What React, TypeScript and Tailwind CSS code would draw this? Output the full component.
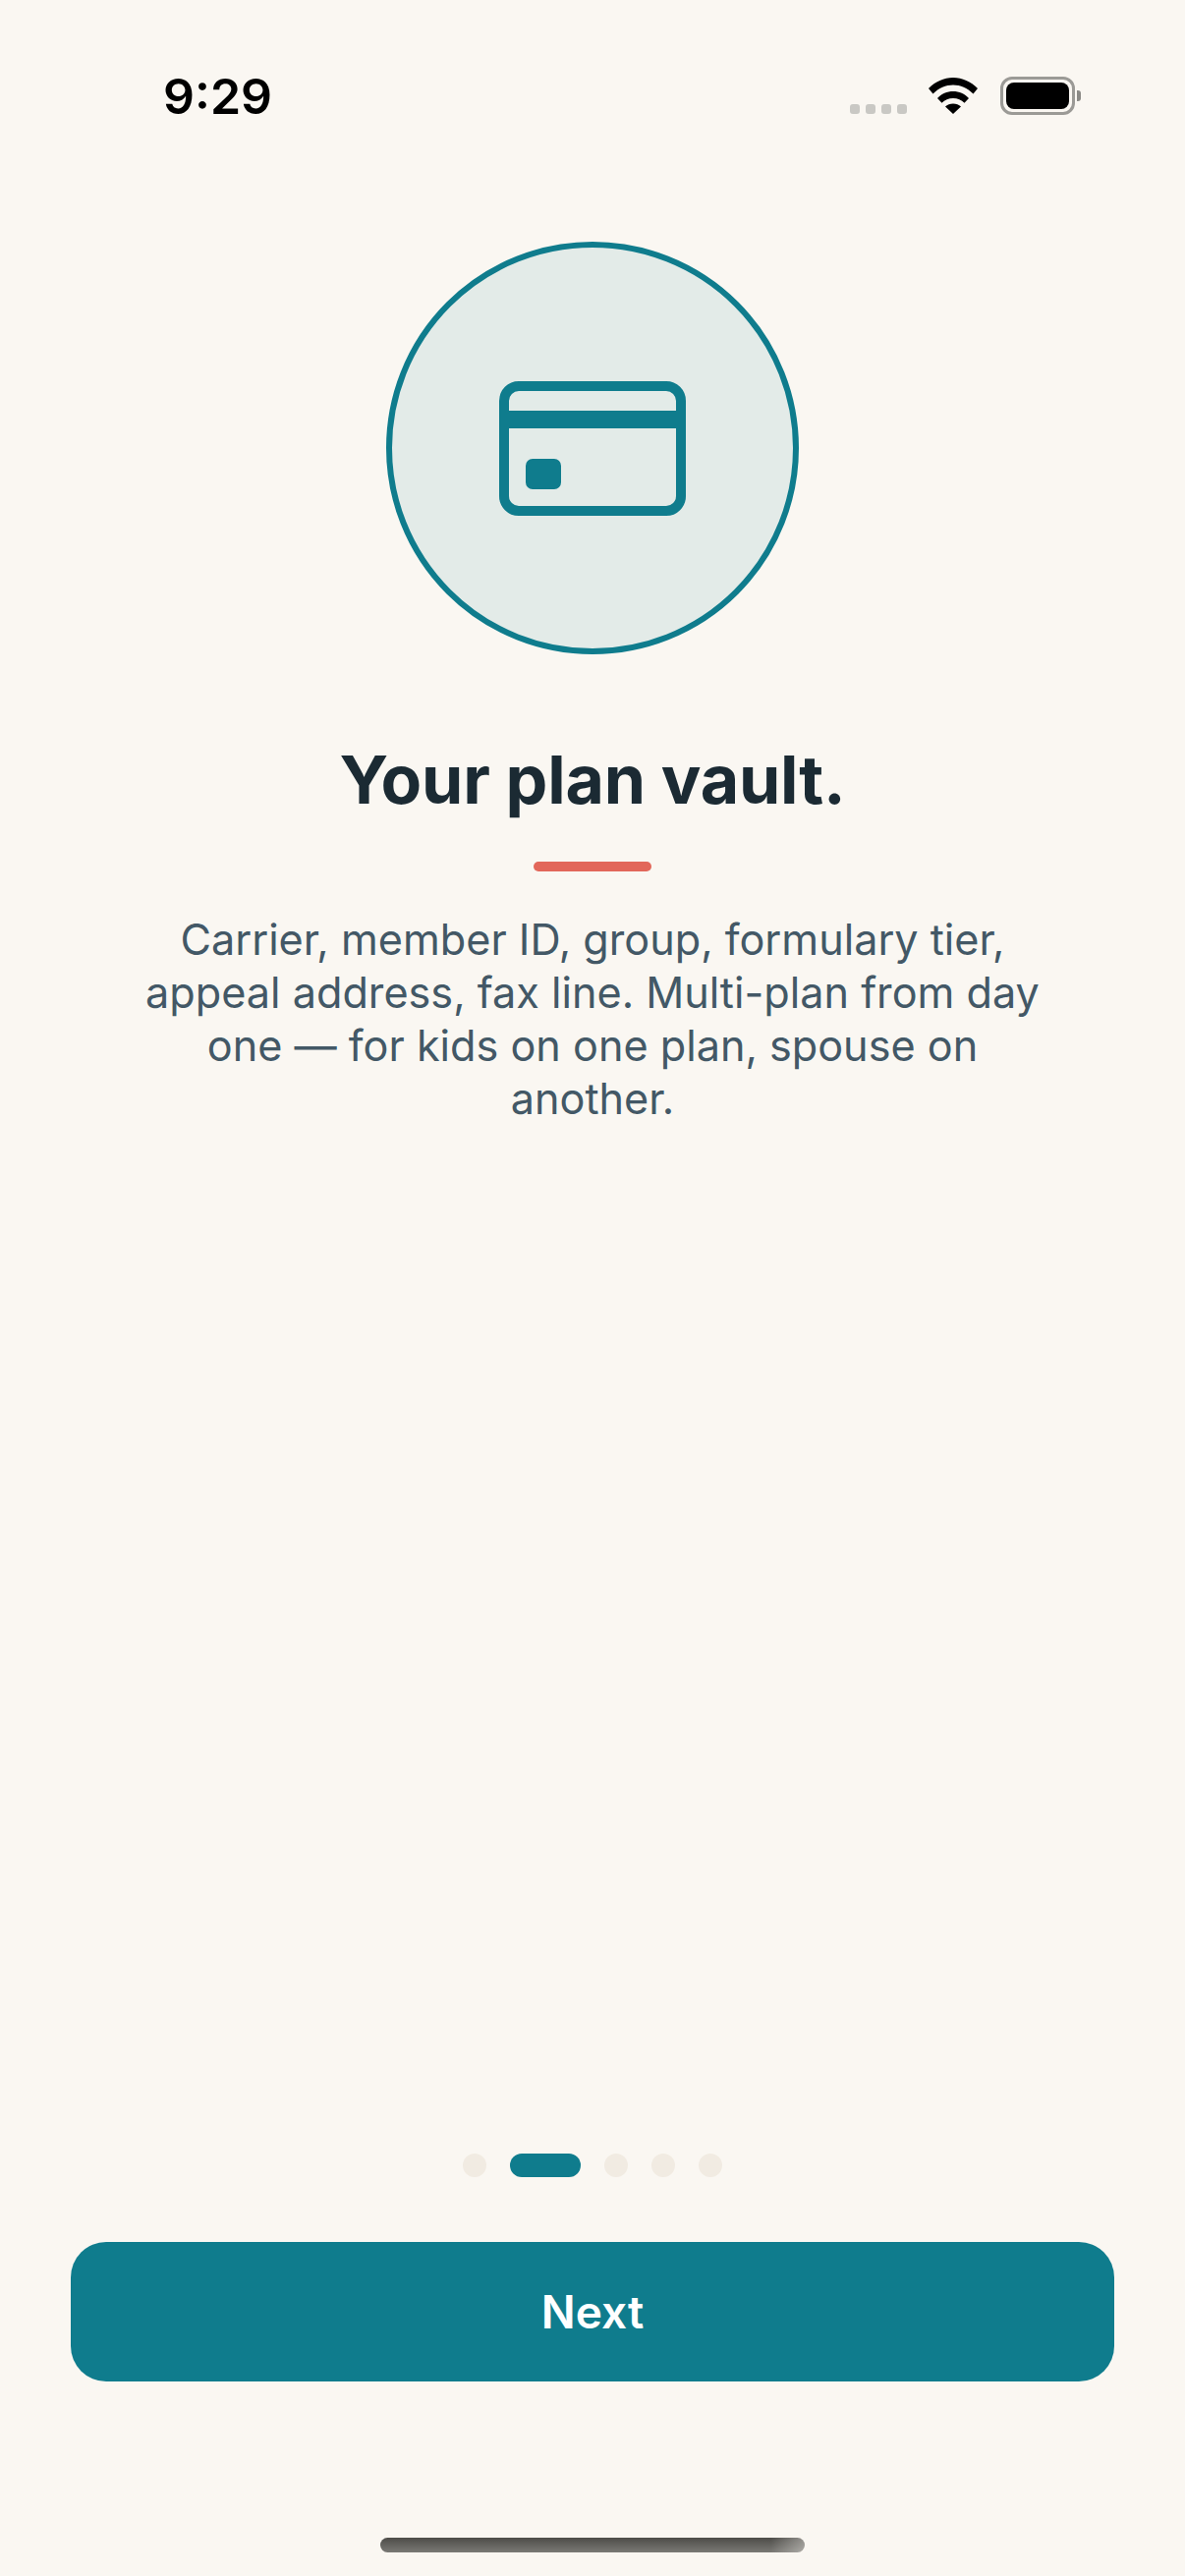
const TEAL = '#0f7c8d'

function StatusBar() {
  return (
    <div className="flex h-[246px] shrink-0 justify-between pl-[166px] pr-[106px] pt-[68px]">
      <span className="font-['Inter',sans-serif] text-[50px] font-semibold leading-[60px] text-black">9:29</span>
      <div className="mt-[10px] flex h-[39px] items-end">
        <div className="mb-[1px] mr-[22px] flex gap-[6px]">
          <span className="h-[10px] w-[10px] rounded-[3px] bg-[#c9c8c4]" />
          <span className="h-[10px] w-[10px] rounded-[3px] bg-[#c9c8c4]" />
          <span className="h-[10px] w-[10px] rounded-[3px] bg-[#c9c8c4]" />
          <span className="h-[10px] w-[10px] rounded-[3px] bg-[#c9c8c4]" />
        </div>
        <svg width="50" height="37" viewBox="0 0 50 37" className="mb-[1px] mr-[23px]">
          <path d="M0 11C7 4 15.500 0 25 0s18 4 25 11l-4.500 5.500C39.500 10.500 32.500 7.500 25 7.500S10.500 10.500 4.500 16.500z" fill="#000" />
          <path d="M9 21C13 16.500 19 14 25 14s12 2.500 16 7l-4.500 4.800C33.500 22.800 29.500 21 25 21s-8.500 1.800-11.500 4.800z" fill="#000" />
          <path d="M17 29.500C19 27.500 22 26.500 25 26.500s6 1 8 3L25 37z" fill="#000" />
        </svg>
        <div className="flex h-[39px] w-[76px] items-center rounded-[12px] border-[3px] border-[#9b9a96] p-[3px]">
          <div className="h-full w-full rounded-[8px] bg-black" />
        </div>
        <div className="mb-[14px] ml-[2px] h-[11px] w-[4px] rounded-r-[3px] bg-[#8a8985]" />
      </div>
    </div>
  )
}

function CardIcon() {
  return (
    <svg width="190" height="137" viewBox="0 0 190 137" fill="none">
      <rect x="5" y="5" width="180" height="127" rx="15" stroke={TEAL} strokeWidth="10" />
      <rect x="5" y="30" width="180" height="18" fill={TEAL} />
      <rect x="27" y="79" width="36" height="31" rx="7" fill={TEAL} />
    </svg>
  )
}

export default function App() {
  return (
    <div className="flex h-[2622px] w-[1206px] flex-col items-center bg-[#faf7f2] font-['Inter',sans-serif]">
      <div className="w-full">
        <StatusBar />
      </div>

      <div className="flex h-[420px] w-[420px] shrink-0 items-center justify-center rounded-full border-[6px] border-[#0f7c8d] bg-[#e3ebe8]">
        <CardIcon />
      </div>

      <h1 className="mt-[84px] text-[68px] font-bold leading-[86px] tracking-[-0.2px] text-[#1b2a33]">Your plan vault.</h1>
      <div className="mt-[41px] h-[10px] w-[120px] rounded-full bg-[#e2675a]" />
      <p className="mt-[42px] w-[940px] text-center text-[43.2px] leading-[54px] text-[#435866]">
        Carrier, member ID, group, formulary tier, appeal address, fax line. Multi-plan from day one — for kids on one plan, spouse on another.
      </p>

      <div className="mb-[66px] mt-auto flex items-center gap-[24px]">
        <span className="h-[24px] w-[24px] rounded-full bg-[#f1ebe2]" />
        <span className="h-[24px] w-[72px] rounded-full bg-[#0f7c8d]" />
        <span className="h-[24px] w-[24px] rounded-full bg-[#f1ebe2]" />
        <span className="h-[24px] w-[24px] rounded-full bg-[#f1ebe2]" />
        <span className="h-[24px] w-[24px] rounded-full bg-[#f1ebe2]" />
      </div>

      <button className="flex h-[142px] w-[1062px] items-center justify-center rounded-[36px] bg-[#0f7c8d] text-[46px] font-semibold text-white">
        Next
      </button>

      <div className="mb-[24px] mt-[159px] h-[15px] w-[432px] rounded-full bg-[linear-gradient(to_right,transparent_92%,rgba(250,247,242,0.4)),linear-gradient(to_bottom,#4d4c48,#7a7975)]" />
    </div>
  )
}
